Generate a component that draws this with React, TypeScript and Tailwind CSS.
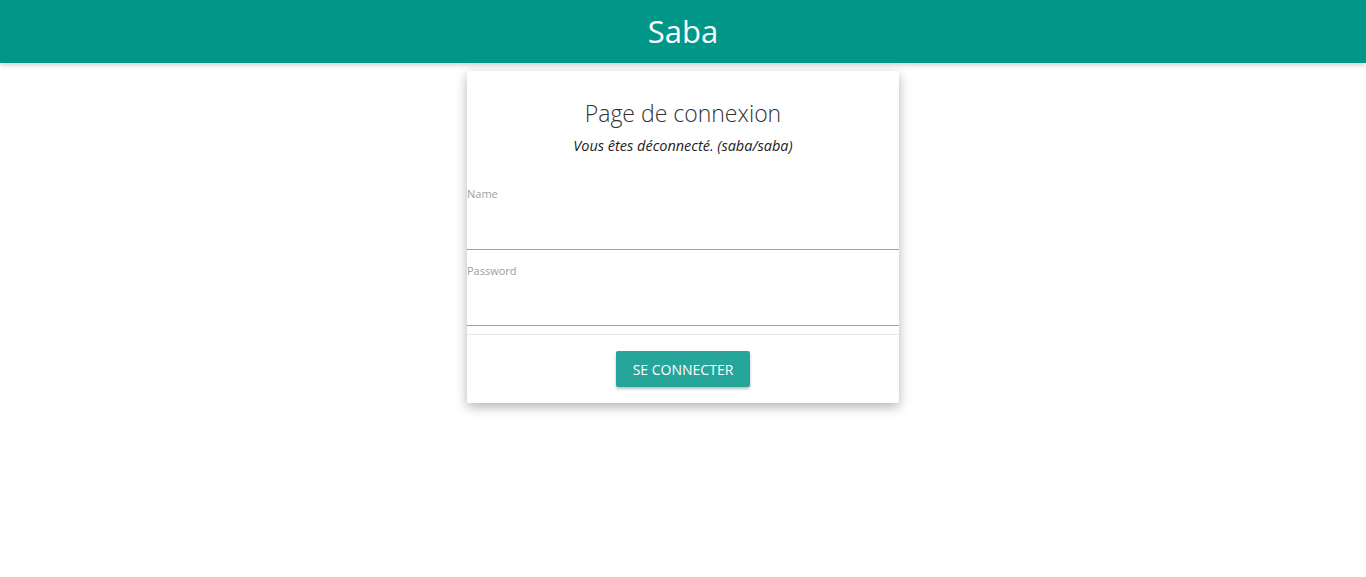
export default function App() {
  return (
    <div
      className="min-h-screen bg-white"
      style={{ fontFamily: "'Open Sans', 'Noto Sans', sans-serif" }}
    >
      {/* Header */}
      <header className="h-[63px] bg-[#009688] flex items-center justify-center shadow-[0_2px_5px_rgba(0,0,0,0.2)] relative z-10">
        <h1 className="text-[31px] text-white leading-none">Saba</h1>
      </header>

      <div className="flex justify-center pt-2">
        <div className="w-[432px] bg-white rounded-[2px] shadow-[0_4px_12px_rgba(0,0,0,0.3)]">
          <div className="pt-[26px] text-center">
            <h2 className="text-[23px] font-light text-[#333] leading-8">Page de connexion</h2>
            <p className="mt-[7px] text-[14.5px] italic text-[#222] leading-5">
              Vous êtes déconnecté. (saba/saba)
            </p>
          </div>

          <form className="mt-[30px]">
            <div>
              <label className="block text-[11px] text-[#9e9e9e] leading-4">Name</label>
              <input
                type="text"
                className="w-full h-[48px] border-b border-[#9e9e9e] outline-none bg-transparent"
              />
            </div>
            <div className="mt-[13px]">
              <label className="block text-[11px] text-[#9e9e9e] leading-4">Password</label>
              <input
                type="password"
                className="w-full h-[47px] border-b border-[#9e9e9e] outline-none bg-transparent"
              />
            </div>

            <div className="mt-[8px] border-t border-[#e8e8e8] flex justify-center pt-4 pb-4">
              <button
                type="button"
                className="w-[134px] h-9 bg-[#26a69a] text-white text-[14px] uppercase rounded-[2px] shadow-[0_2px_3px_rgba(0,0,0,0.25)]"
              >
                Se connecter
              </button>
            </div>
          </form>
        </div>
      </div>
    </div>
  );
}
